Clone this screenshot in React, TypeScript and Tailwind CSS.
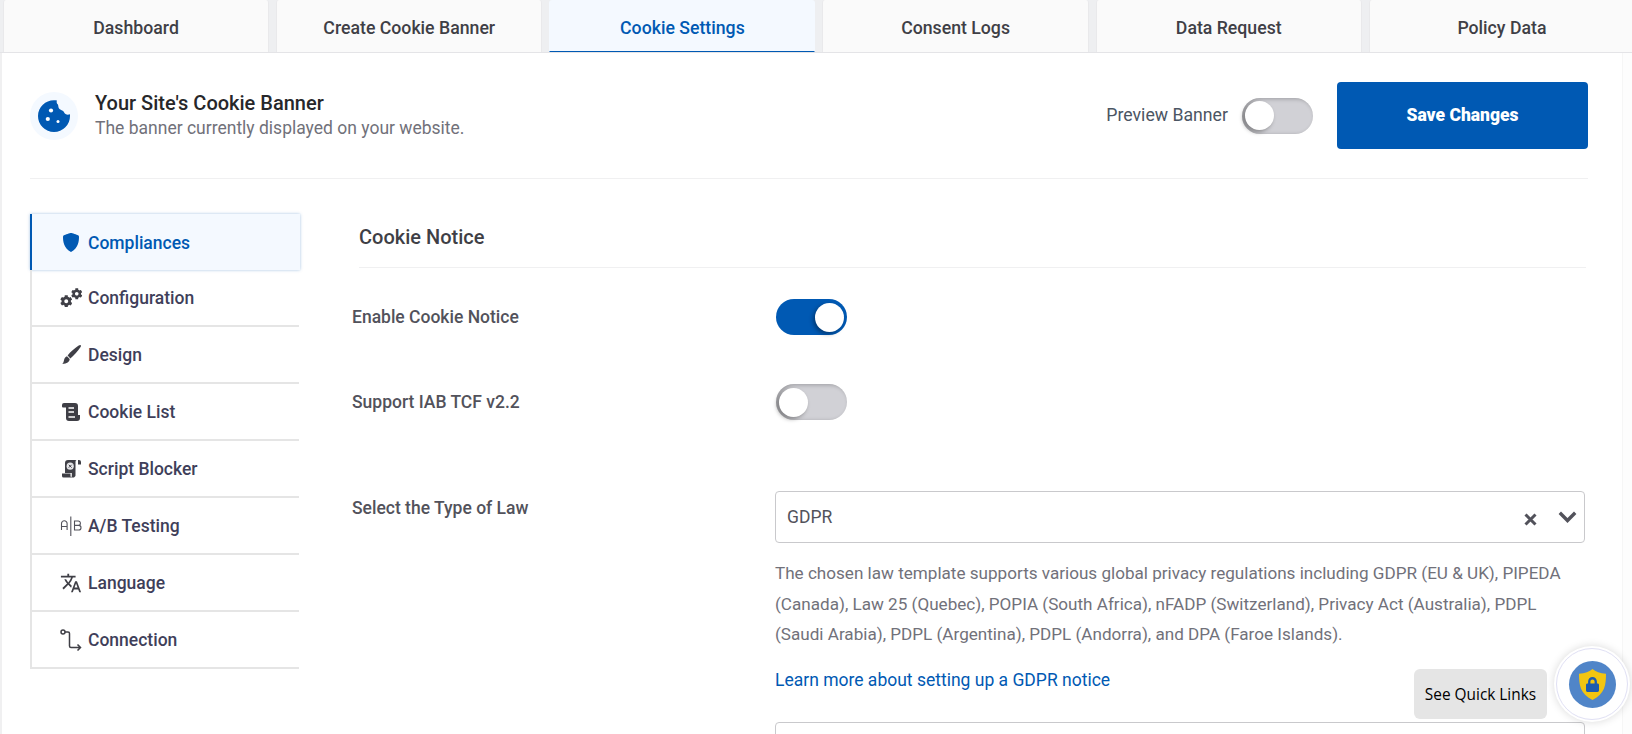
import React from "react";
import { FaCog, FaLock } from "react-icons/fa";
import { MdTranslate } from "react-icons/md";

const tabs = ["Dashboard", "Create Cookie Banner", "Cookie Settings", "Consent Logs", "Data Request", "Policy Data"];

function CookieIcon() {
  return (
    <svg viewBox="0 0 32 32" className="w-[32px] h-[32px]">
      <path d="M19 .6C10-1.500 0 5.500 0 16a16 16 0 0 0 32 0c0-.6 0-1.200-.1-1.800-2.200 1-5 .3-5.900-2-.7-1.900-3-1.800-4.500-3.200-1.400-1.400-1-3-1.500-4.500C19.500 4 18 2.500 19 .6z" fill="#0059b3" />
      <circle cx="13" cy="10.500" r="2.100" fill="#fff" />
      <circle cx="9.800" cy="19" r="2.100" fill="#fff" />
      <circle cx="20" cy="21.400" r="1.500" fill="#fff" />
    </svg>
  );
}
function ShieldIcon() {
  return (
    <svg viewBox="0 0 16 19" className="w-[16px] h-[19px]" fill="#0059b3">
      <path d="M8 0c1 0 6 1.700 7 2.200.6.300 1 .8 1 1.500 0 5-.8 11.500-8 15.300C.8 15.200 0 8.700 0 3.700c0-.7.4-1.200 1-1.500C2 1.700 7 0 8 0z" />
    </svg>
  );
}
function GearsIcon() {
  return (
    <div className="flex items-start h-[19px] w-[23px]">
      <FaCog className="w-[12.500px] h-[12.500px] mt-[6.500px] text-[#3f3f46]" />
      <FaCog className="w-[11.500px] h-[11.500px] -ml-[1px] text-[#3f3f46]" />
    </div>
  );
}
function BrushIcon() {
  return (
    <svg viewBox="0 0 19 19" className="w-[19px] h-[19px]" fill="#3f3f46">
      <path d="M18.700.3c.4.400.2 1.200-.3 2C15.800 6.300 11.800 10.800 8.400 13.400L5.600 10.600C8.200 7.200 12.700 3.200 16.700.6c.8-.5 1.600-.7 2-.3z" />
      <path d="M5 11.300l2.700 2.700c-.2 2.900-2.700 4.900-7.400 4.900 1.400-1.300 1.300-2.600 1.800-4.200.5-1.700 1.500-3 2.900-3.400z" />
    </svg>
  );
}
function ScrollIcon() {
  return (
    <svg viewBox="0 0 18 18" className="w-[18px] h-[18px]">
      <path d="M2 0H13a3 3 0 0 1 3 3v9h2v3a3 3 0 0 1-3 3H7a3 3 0 0 1-3-3V4.500H1a1 1 0 0 1-1-1V2a2 2 0 0 1 2-2z" fill="#3f3f46" />
      <path d="M6.500 5H12M6.500 9H12M6.500 14H13" stroke="#fff" strokeWidth="1.400" />
    </svg>
  );
}
function ScriptIcon() {
  return (
    <svg viewBox="0 0 19 18" className="w-[19px] h-[18px]">
      <path d="M6 0H14.500a2 2 0 0 0-1 2V14a3 3 0 0 1-1.500 3.500H9a2 2 0 0 0 .8-1.800V13H3V3a3 3 0 0 1 3-3z" fill="#3f3f46" />
      <path d="M16 0h1a2 2 0 0 1 2 2v2.500h-3z" fill="#3f3f46" />
      <path d="M0 13.500h8.500V16a2 2 0 0 0 .8 1.500H1.500A1.500 1.500 0 0 1 0 16z" fill="#3f3f46" />
      <circle cx="8.200" cy="6.200" r="3.600" fill="#e4e4e7" />
      <path d="M6.800 4.800l2.800 2.800M9.600 4.800L6.800 7.600" stroke="#3f3f46" strokeWidth="1" />
    </svg>
  );
}
function AbIcon() {
  return (
    <svg viewBox="0 0 22 22" className="w-[22px] h-[22px]" fill="none" stroke="#52525b" strokeWidth="1.100">
      <path d="M1.500 15V8.500a2.800 2.800 0 0 1 5.600 0V15M1.500 11.500h5.600" />
      <path d="M10.800 1.500v19.500" />
      <path d="M14.500 6h3.700a2.200 2.200 0 0 1 0 4.400h-3.700zM14.500 10.400h4.200a2.300 2.300 0 0 1 0 4.600h-4.200z" />
    </svg>
  );
}
function RouteIcon() {
  return (
    <svg viewBox="0 0 22 22" className="w-[22px] h-[22px]" fill="none" stroke="#3f3f46" strokeWidth="1.500">
      <circle cx="3" cy="3" r="2" />
      <path d="M5 3h3a1.500 1.500 0 0 1 1.500 1.500v12.500a1.500 1.500 0 0 0 1.500 1.500h9M17.500 15.500l3 3-3 3" />
    </svg>
  );
}

const items: { label: string; icon: React.ReactNode; active?: boolean }[] = [
  { label: "Compliances", icon: <ShieldIcon />, active: true },
  { label: "Configuration", icon: <GearsIcon /> },
  { label: "Design", icon: <BrushIcon /> },
  { label: "Cookie List", icon: <ScrollIcon /> },
  { label: "Script Blocker", icon: <ScriptIcon /> },
  { label: "A/B Testing", icon: <AbIcon /> },
  { label: "Language", icon: <MdTranslate className="w-[22px] h-[22px] text-[#3f3f46]" /> },
  { label: "Connection", icon: <RouteIcon /> },
];

function Toggle({ on, className = "" }: { on?: boolean; className?: string }) {
  return (
    <div className={`w-[71px] h-[36px] rounded-full flex items-center px-[3px] shrink-0 ${on ? "bg-[#0059b3] justify-end" : "bg-[#d1d1d6] shadow-[inset_2px_1px_4px_rgba(0,0,0,0.25)]"} ${className}`}>
      <div className="w-[29px] h-[29px] rounded-full bg-white shadow-[-2px_2px_4px_rgba(0,0,0,0.35)]" />
    </div>
  );
}

export default function App() {
  return (
    <div className="relative w-[1632px] h-[734px] overflow-hidden bg-[#fdfdfd] font-['Roboto',sans-serif]">
      <div className="grid grid-cols-6 gap-[7px] h-[53px] pl-[3px] mr-[-3px] bg-[#eeeff1] border-b border-[#e4e4e7]">
        {tabs.map((t) => (
          <div
            key={t}
            className={`flex items-center justify-center pt-[5px] text-[17.700px] rounded-t-[3px] border-x ${
              t === "Cookie Settings"
                ? "bg-[#f4f9ff] text-[#0059b3] font-medium border-transparent border-b border-b-[#0059b3]"
                : "bg-[#fafafa] text-[#3f3f46] font-medium border-[#e9e9eb]"
            }`}
          >
            {t}
          </div>
        ))}
      </div>

      <div className="h-[681px] mr-[9px] pl-[28px] pr-[34px] bg-white border-l-2 border-l-[#f0f0f1] border-r border-r-[#f6f6f6]">
        <div className="flex items-center h-[126px] border-b border-[#f0f0f1]">
          <div className="w-[48px] h-[48px] rounded-full bg-[#f4f9ff] flex items-center justify-center">
            <CookieIcon />
          </div>
          <div className="ml-[17px]">
            <div className="text-[20px] leading-[25px] font-medium text-[#27272a]">Your Site's Cookie Banner</div>
            <div className="text-[17.500px] leading-[25px] text-[#71717a]">The banner currently displayed on your website.</div>
          </div>
          <div className="ml-auto flex items-center">
            <span className="text-[17.700px] text-[#4b5563]">Preview Banner</span>
            <Toggle className="ml-[14px]" />
            <button className="ml-[24px] w-[251px] h-[67px] rounded-[4px] bg-[#0059b3] text-white text-[17.500px] font-black">Save Changes</button>
          </div>
        </div>

        <div className="flex pt-[35px]">
          <div className="w-[270px] shrink-0">
            {items.map((it) => (
              <div
                key={it.label}
                className={`flex items-center border-l-2 ${
                  it.active
                    ? "h-[56px] bg-[#f4f9ff] border-l-[#0059b3] shadow-[0_0_3px_rgba(0,89,179,0.35)] text-[#0059b3]"
                    : "h-[57px] mr-[1px] border-l-[#e5e5e5] border-b-2 border-b-[#e5e5e5] text-[#3f3f5a]"
                }`}
              >
                <div className="w-[56px] flex justify-center pl-[25px] pr-[3px] shrink-0">{it.icon}</div>
                <span className="text-[17.500px] font-medium pt-[2px]">{it.label}</span>
              </div>
            ))}
          </div>

          <div className="flex-1 pl-[52px] min-w-0">
            <div className="ml-[7px] mr-[2px] h-[54px] flex items-start border-b border-[#f0f0f1] text-[20px] font-medium text-[#3f3f46]">
              <span className="leading-[47px]">Cookie Notice</span>
            </div>
            <div className="flex items-center mt-[31px] h-[36px]">
              <div className="w-[424px] text-[17.500px] font-medium text-[#52525b]">Enable Cookie Notice</div>
              <Toggle on />
            </div>
            <div className="flex items-center mt-[49px] h-[36px]">
              <div className="w-[424px] text-[17.500px] font-medium text-[#52525b]">Support IAB TCF v2.2</div>
              <Toggle />
            </div>
            <div className="flex mt-[71px]">
              <div className="w-[423px] text-[17.500px] font-medium text-[#52525b] pt-[4px]">Select the Type of Law</div>
              <div className="flex-1 min-w-0 mr-[3px]">
                <div className="h-[52px] border border-[#c9c9cc] rounded-[4px] flex items-center pl-[11px] pr-[7px] text-[17.500px] text-[#52525b]">
                  GDPR
                  <svg viewBox="0 0 13 13" className="ml-auto w-[13px] h-[13px] translate-y-[2px]" fill="none" stroke="#52525b" strokeWidth="3"><path d="M1.500 1.500l10 10M11.500 1.500l-10 10" /></svg>
                  <svg viewBox="0 0 19 12" className="ml-[21px] w-[19px] h-[12px]" fill="none" stroke="#52525b" strokeWidth="3.400"><path d="M1.800 1.800l7.700 7.700 7.700-7.700" /></svg>
                </div>
                <p className="mt-[15px] text-[17.100px] leading-[30.500px] text-[#71717a]">
                  The chosen law template supports various global privacy regulations including GDPR (EU &amp; UK), PIPEDA (Canada), Law 25 (Quebec), POPIA (South Africa), nFADP (Switzerland), Privacy Act (Australia), PDPL (Saudi Arabia), PDPL (Argentina), PDPL (Andorra), and DPA (Faroe Islands).
                </p>
                <a className="block mt-[18px] text-[17.500px] leading-[24px] text-[#0059b3]">Learn more about setting up a GDPR notice</a>
                <div className="mt-[30px] h-[60px] border border-[#c9c9cc] rounded-[4px]" />
              </div>
            </div>
          </div>
        </div>
      </div>

      <div className="absolute left-[1414px] top-[669px] w-[133px] h-[50px] pt-[1px] rounded-[6px] bg-[#e5e5e5] flex items-center justify-center text-[15.400px] text-black font-['Open_Sans',sans-serif]">See Quick Links</div>
      <div className="absolute left-[1554px] top-[646px] w-[76px] h-[76px] rounded-full bg-white shadow-[0_0_8px_rgba(0,0,0,0.15)] flex items-center justify-center">
        <div className="w-[72px] h-[72px] rounded-full border-[1.500px] border-[#e0e0f4] flex items-center justify-center">
          <div className="relative w-[47px] h-[47px] rounded-full bg-[#5085c8] flex items-center justify-center">
            <svg viewBox="0 0 27 31" className="w-[27px] h-[31px]"><path d="M13.500 0c3 2.600 7.500 4.400 13.500 4.800 0 11-1 20-13.500 26.200C1 24.800 0 15.800 0 4.800 6 4.400 10.500 2.600 13.500 0z" fill="#f2c511" /></svg>
            <FaLock className="absolute w-[13px] h-[15px] text-[#1d5bb0]" />
          </div>
        </div>
      </div>
    </div>
  );
}
